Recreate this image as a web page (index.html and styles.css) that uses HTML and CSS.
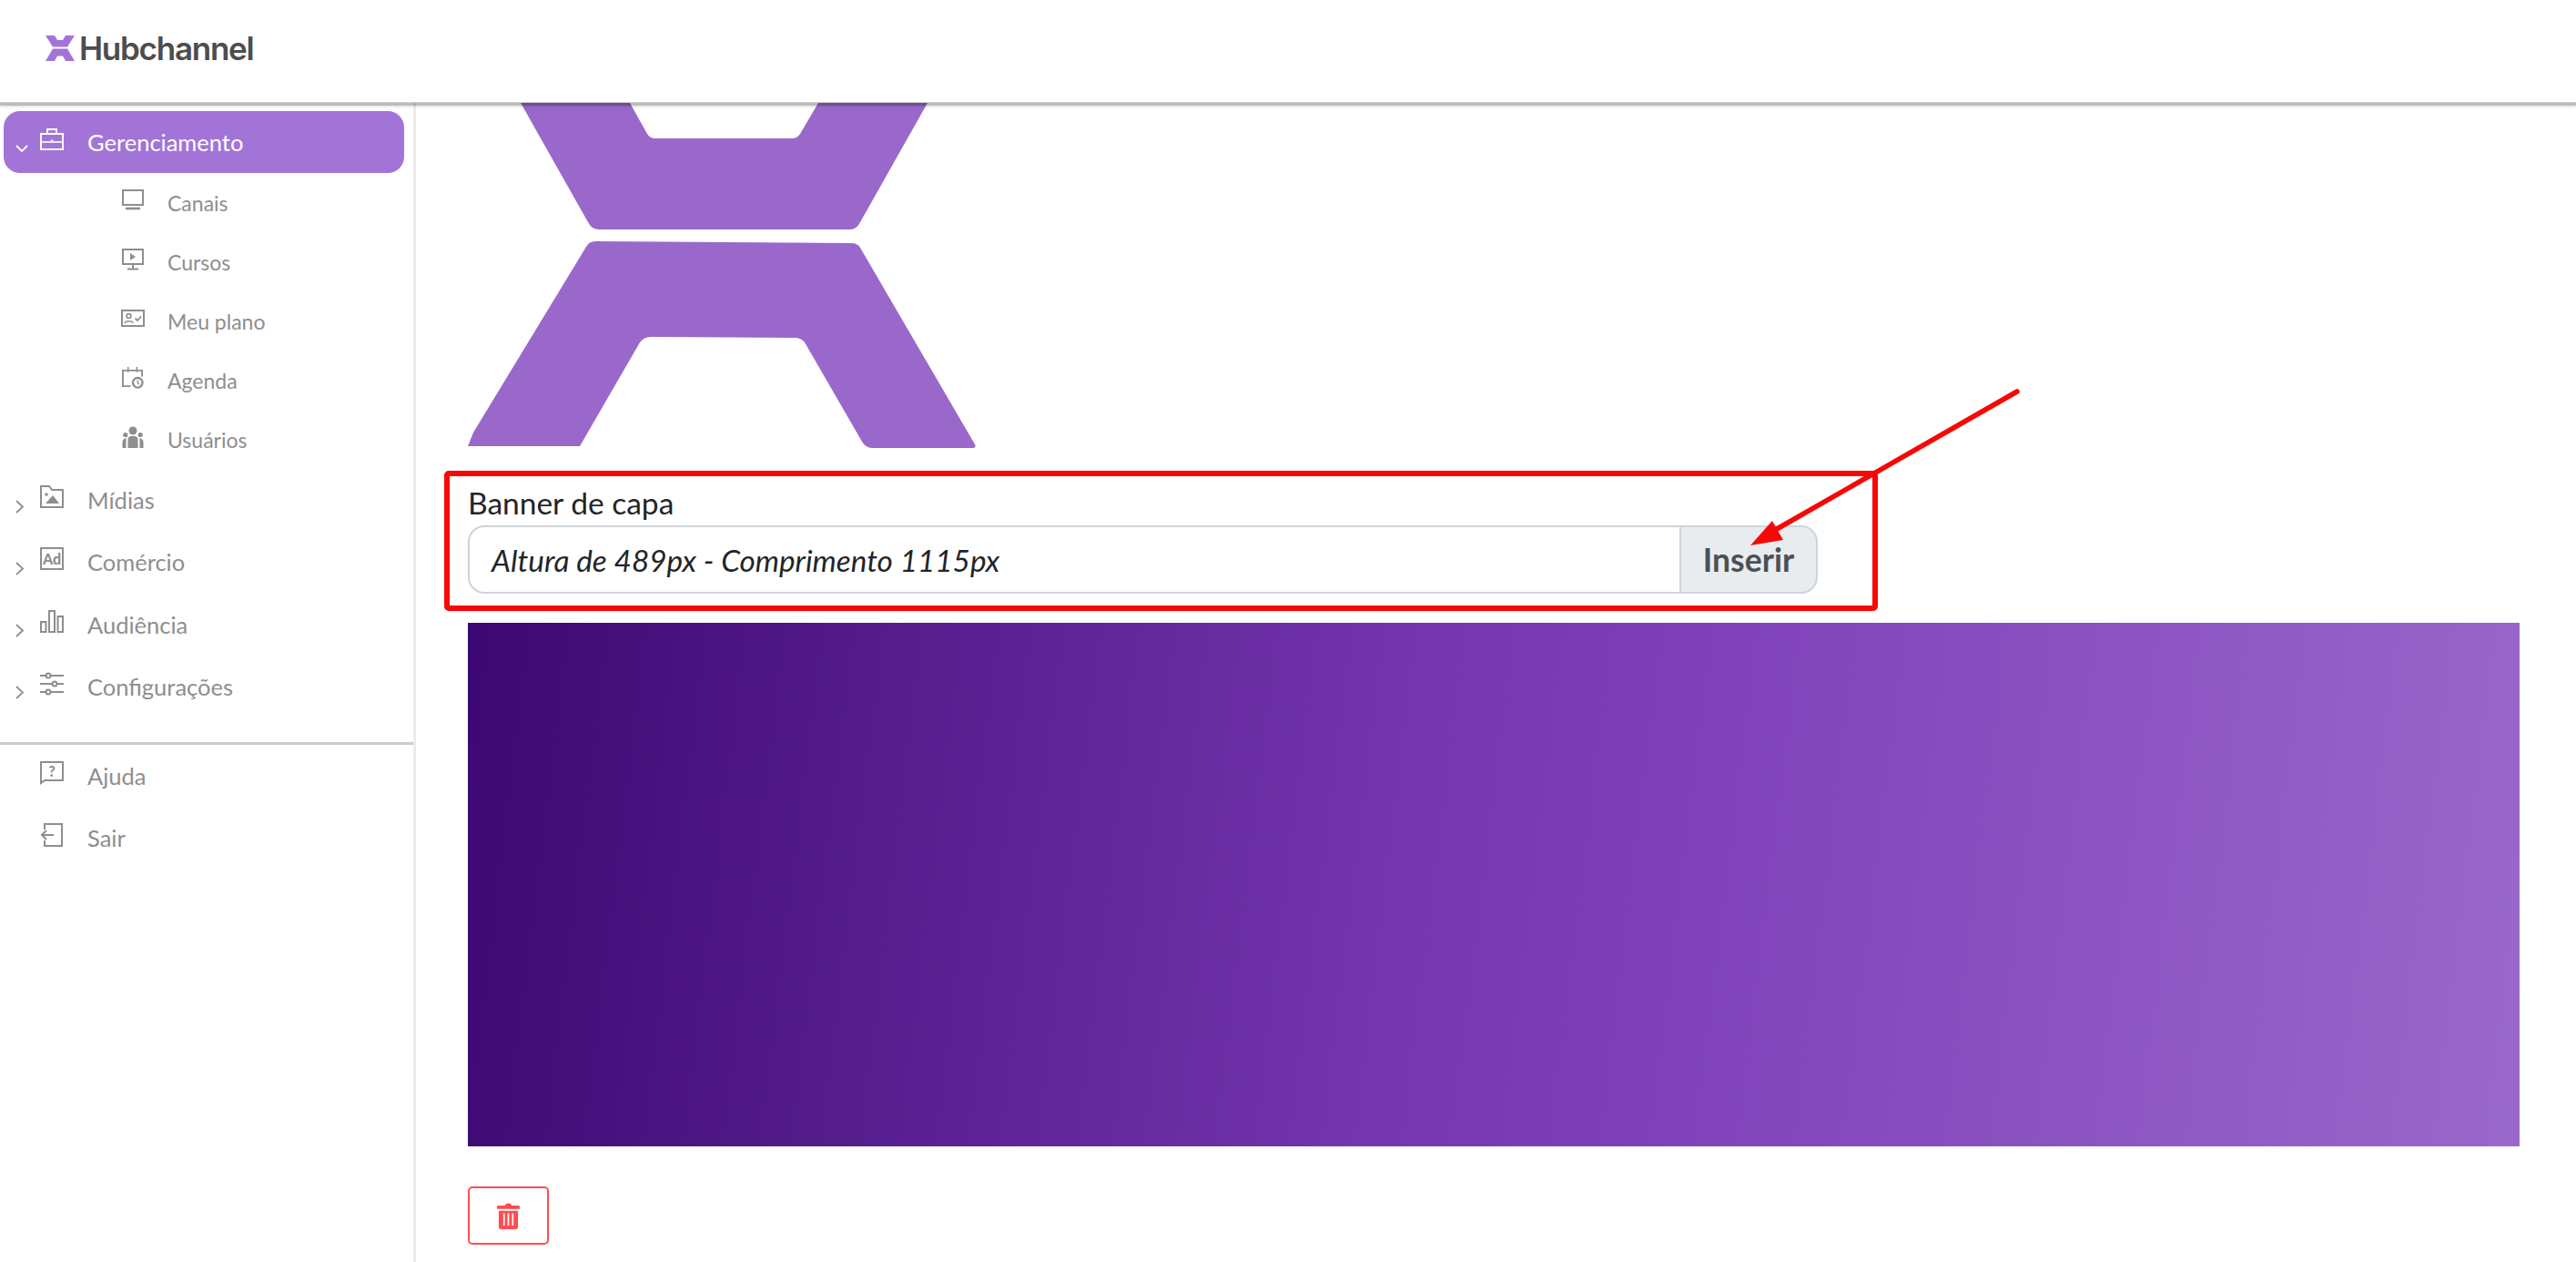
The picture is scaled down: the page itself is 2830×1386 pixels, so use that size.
FILE: index.html
```html
<!DOCTYPE html>
<html lang="pt-BR">
<head>
<meta charset="utf-8">
<title>Hubchannel</title>
<link rel="stylesheet" href="styles.css">
</head>
<body>
<div class="page">
  <header class="topbar">
    <div class="brand">
      <svg class="brand-mark" viewBox="0 0 32 28"><path d="M0 0H10L13 5H19L22 0H32L24 12.6H8Z"/><path d="M8 14.6H24L32 28H22L19 22.4H13L10 28H0Z"/></svg>
      <span class="brand-name">Hubchannel</span>
    </div>
  </header>
  <div class="layout">
    <aside class="sidebar">
      <nav class="menu">
        <a class="item active">
          <svg class="chev" viewBox="0 0 16 16"><path d="M2 5l6 6 6-6"/></svg>
          <svg class="ico" viewBox="0 0 26 26"><path d="M8 7V2h10v5"/><rect x="1" y="7" width="24" height="17"/><path d="M1 16h24" stroke-width="1.6"/><path d="M13 13.5v1.5" stroke-width="2.4"/></svg>
          <span>Gerenciamento</span>
        </a>
        <a class="sub">
          <svg class="ico-s" viewBox="0 0 24 24"><rect x="1" y="1" width="22" height="16"/><path d="M4 21h16" stroke-width="2.6"/></svg>
          <span>Canais</span>
        </a>
        <a class="sub">
          <svg class="ico-s" viewBox="0 0 24 24"><rect x="1" y="1" width="22" height="16"/><path class="solid" d="M9 5l6 4-6 4z"/><path d="M12 17v5M6 22.500h12"/></svg>
          <span>Cursos</span>
        </a>
        <a class="sub">
          <svg class="ico-s ico-wide" viewBox="0 0 26 20"><rect x="1" y="1" width="24" height="17"/><circle cx="8.500" cy="7" r="2.400" stroke-width="1.600"/><path d="M4 15c0-3 9-3 9 0" stroke-width="1.600"/><path d="M15.500 9.500l2.500 2.500 4-4.500" stroke-width="1.800"/></svg>
          <span>Meu plano</span>
        </a>
        <a class="sub">
          <svg class="ico-s" viewBox="0 0 25 25"><path d="M10 22H1V4h22v7"/><path d="M7 0v6M17 0v6" stroke-width="1.600"/><circle cx="18" cy="18" r="5.500" stroke-width="2.400"/><path d="M18 15v3.500l2 1.500" stroke-width="1.400"/></svg>
          <span>Agenda</span>
        </a>
        <a class="sub">
          <svg class="ico-s" viewBox="0 0 24 24"><g class="solid"><circle cx="12" cy="5" r="4.500"/><circle cx="3.800" cy="9.500" r="2.600"/><circle cx="20.200" cy="9.500" r="2.600"/><path d="M6.500 24V15q0-4 4-4h3q4 0 4 4v9z"/><path d="M0.500 24v-6q0-4 4-5v11zM23.500 24v-6q0-4-4-5v11z"/></g></svg>
          <span>Usuários</span>
        </a>
        <a class="item">
          <svg class="chev" viewBox="0 0 16 16"><path d="M2 2l7 6.500-7 6.500"/></svg>
          <svg class="ico" viewBox="0 0 26 26"><path d="M1 24V1h9l3 4h12v19z"/><circle class="solid" cx="7" cy="10" r="1.800"/><path class="solid" d="M6 20l8-9 7 9z"/></svg>
          <span>Mídias</span>
        </a>
        <a class="item">
          <svg class="chev" viewBox="0 0 16 16"><path d="M2 2l7 6.500-7 6.500"/></svg>
          <svg class="ico" viewBox="0 0 26 26"><rect x="1" y="1" width="24" height="23"/><text class="ad-text" x="13" y="19" text-anchor="middle">Ad</text></svg>
          <span>Comércio</span>
        </a>
        <a class="item">
          <svg class="chev" viewBox="0 0 16 16"><path d="M2 2l7 6.500-7 6.500"/></svg>
          <svg class="ico" viewBox="0 0 26 26"><rect x="1" y="13" width="5.500" height="11"/><rect x="10" y="1" width="6" height="23"/><rect x="19.500" y="7" width="5.500" height="17"/></svg>
          <span>Audiência</span>
        </a>
        <a class="item">
          <svg class="chev" viewBox="0 0 16 16"><path d="M2 2l7 6.500-7 6.500"/></svg>
          <svg class="ico" viewBox="0 0 26 26"><path d="M0 4h6M12 4h14M0 13h13M19 13h7M0 22h6M12 22h14"/><circle cx="9" cy="4" r="2.500"/><circle cx="16" cy="13" r="2.500"/><circle cx="9" cy="22" r="2.500"/></svg>
          <span>Configurações</span>
        </a>
      </nav>
      <nav class="menu-bottom">
        <a class="item">
          <span class="chev-space"></span>
          <svg class="ico" viewBox="0 0 26 26"><path d="M1 24V1h24v20H5z"/><text class="help-text" x="13" y="16.500" text-anchor="middle">?</text></svg>
          <span>Ajuda</span>
        </a>
        <a class="item">
          <span class="chev-space"></span>
          <svg class="ico" viewBox="0 0 26 26"><path d="M5 7V1h19v24H5v-6"/><path d="M15 13H2M7 8l-5 5 5 5"/></svg>
          <span>Sair</span>
        </a>
      </nav>
    </aside>
    <main class="content">
      <svg class="hero-logo" viewBox="514 113 560 382"><path d="M572 113L646 244Q650 252 658 252L934 252Q941 252 945 244L1019 113H899L879 147Q876 152 870 152H720Q714 152 711 147L692 113Z"/><path d="M644 271Q647 265 654 265L935 267Q942 267 945 272L1071 488Q1073 492 1068 492H958Q951 492 947 485L884 376Q880 371 873 371L715 370Q707 370 703 376L637 490H514L520 475Z"/></svg>
      <label class="field-label">Banner de capa</label>
      <div class="input-group">
        <div class="input">Altura de 489px - Comprimento 1115px</div>
        <div class="input-btn">Inserir</div>
      </div>
      <div class="banner"></div>
      <div class="trash-btn">
        <svg class="trash" viewBox="0 0 26 30"><path class="trash-fill" d="M0 4.500Q0 3 1.500 3H9Q10 .5 13 .5T17 3H24.500Q26 3 26 4.500V7H0Z"/><path class="trash-fill" d="M2 9H24V27Q24 30 21 30H5Q2 30 2 27Z"/><path class="trash-slot" d="M8 12V26M13 12V26M18 12V26"/></svg>
      </div>
    </main>
  </div>
  <svg class="annotation" viewBox="0 0 2830 1386">
    <rect class="note-box" x="491" y="520" width="1569" height="148" rx="2"/>
    <path class="note-line" d="M2216 430L1945 585"/>
    <path class="note-head" d="M1923 599L1947 572L1959 593Z"/>
  </svg>
</div>
</body>
</html>
```
FILE: styles.css
```css
* { box-sizing: border-box; }
html, body { margin: 0; padding: 0; background: #fff; }
body { font-family: Lato, "Open Sans", sans-serif; }
.page { position: relative; width: 2830px; height: 1386px; overflow: hidden; display: flex; flex-direction: column; }

.topbar { position: relative; z-index: 2; flex: 0 0 113px; height: 113px; background: #fff; box-shadow: inset 0 -1px 0 #cfcfcf, 0 3px 1px rgba(0,0,0,.2), 0 5px 3px rgba(0,0,0,.08); display: flex; align-items: center; padding-left: 50px; padding-bottom: 8px; }
.brand { display: flex; align-items: center; gap: 5px; }
.brand-mark { width: 32px; height: 28px; fill: #a374d8; display: block; }
.brand-name { font-family: Inter, sans-serif; font-weight: 600; font-size: 35px; line-height: 38px; letter-spacing: -1.25px; color: #4d4d4d; }

.layout { flex: 1; display: flex; min-height: 0; }
.sidebar { flex: 0 0 457px; width: 457px; border-right: 3px solid #ececec; padding-top: 9px; }
.menu { padding-bottom: 27px; border-bottom: 3px solid #cbcbcb; }
.menu-bottom { display: flex; flex-direction: column; }

.item { display: flex; align-items: center; height: 68.2px; width: 440px; margin-left: 4px; padding-left: 12px; color: #8e8e8e; font-size: 25.5px; border-radius: 18px; }
.item.active { background: #a374d8; color: #fff; }
.sub { display: flex; align-items: center; height: 65px; padding-left: 134px; color: #8e8e8e; font-size: 23px; }
.sub span { padding-left: 26px; }

.chev { flex: 0 0 16px; width: 16px; height: 16px; margin-right: 12px; margin-top: 13px; fill: none; stroke: currentColor; stroke-width: 1.8; }
.chev-space { flex: 0 0 28px; }
.ico { flex: 0 0 26px; width: 26px; height: 26px; margin-right: 26px; margin-bottom: 6px; fill: none; stroke: currentColor; stroke-width: 2; }
.ico-s { flex: 0 0 24px; width: 24px; height: 24px; margin-bottom: 6px; fill: none; stroke: currentColor; stroke-width: 2; }
.ico-wide { flex-basis: 26px; width: 26px; margin: 0 -1px 6px; }
.solid { fill: currentColor; stroke: none; }
.ad-text { font-family: Lato, sans-serif; font-weight: 900; font-size: 16px; fill: currentColor; stroke: none; }
.help-text { font-family: Lato, sans-serif; font-weight: 900; font-size: 16px; fill: currentColor; stroke: none; }

.content { flex: 1; min-width: 0; padding: 0 62px 0 57px; display: flex; flex-direction: column; }
.hero-logo { display: block; width: 560px; height: 382px; fill: #9a68cb; flex: none; }
.field-label { margin-top: 35px; margin-bottom: 3px; font-size: 33.5px; line-height: 44px; color: #212529; }
.input-group { display: flex; height: 75px; width: 1483px; }
.input { flex: 1; display: flex; align-items: center; padding-left: 24px; border: 2px solid #ced4da; border-right: 0; border-radius: 18px 0 0 18px; background: #fff; font-style: italic; font-size: 33.3px; color: #212529; }
.input-btn { flex: 0 0 152px; display: flex; align-items: center; justify-content: center; background: #e9ecef; border: 2px solid #ced4da; border-radius: 0 18px 18px 0; font-size: 35.500px; font-weight: 700; color: #495057; }
.banner { height: 575px; margin-top: 32px; flex: none; background: linear-gradient(97deg, #3c0871 0%, #7435ae 45%, #8042ba 60%, #9a68cb 100%); }
.trash-btn { width: 89px; height: 64px; margin-top: 44px; border: 2px solid #ff4d4f; border-radius: 5px; display: flex; align-items: center; justify-content: center; flex: none; }
.trash { width: 25px; height: 29px; display: block; }
.trash-fill { fill: #ff4d4f; }
.trash-slot { stroke: #fff; stroke-width: 1.8; fill: none; }

.annotation { position: absolute; left: 0; top: 0; width: 2830px; height: 1386px; z-index: 3; pointer-events: none; }
.note-box { fill: none; stroke: #f80707; stroke-width: 6; }
.note-line { stroke: #f80707; stroke-width: 5.500; stroke-linecap: round; fill: none; }
.note-head { fill: #f80707; }
```
